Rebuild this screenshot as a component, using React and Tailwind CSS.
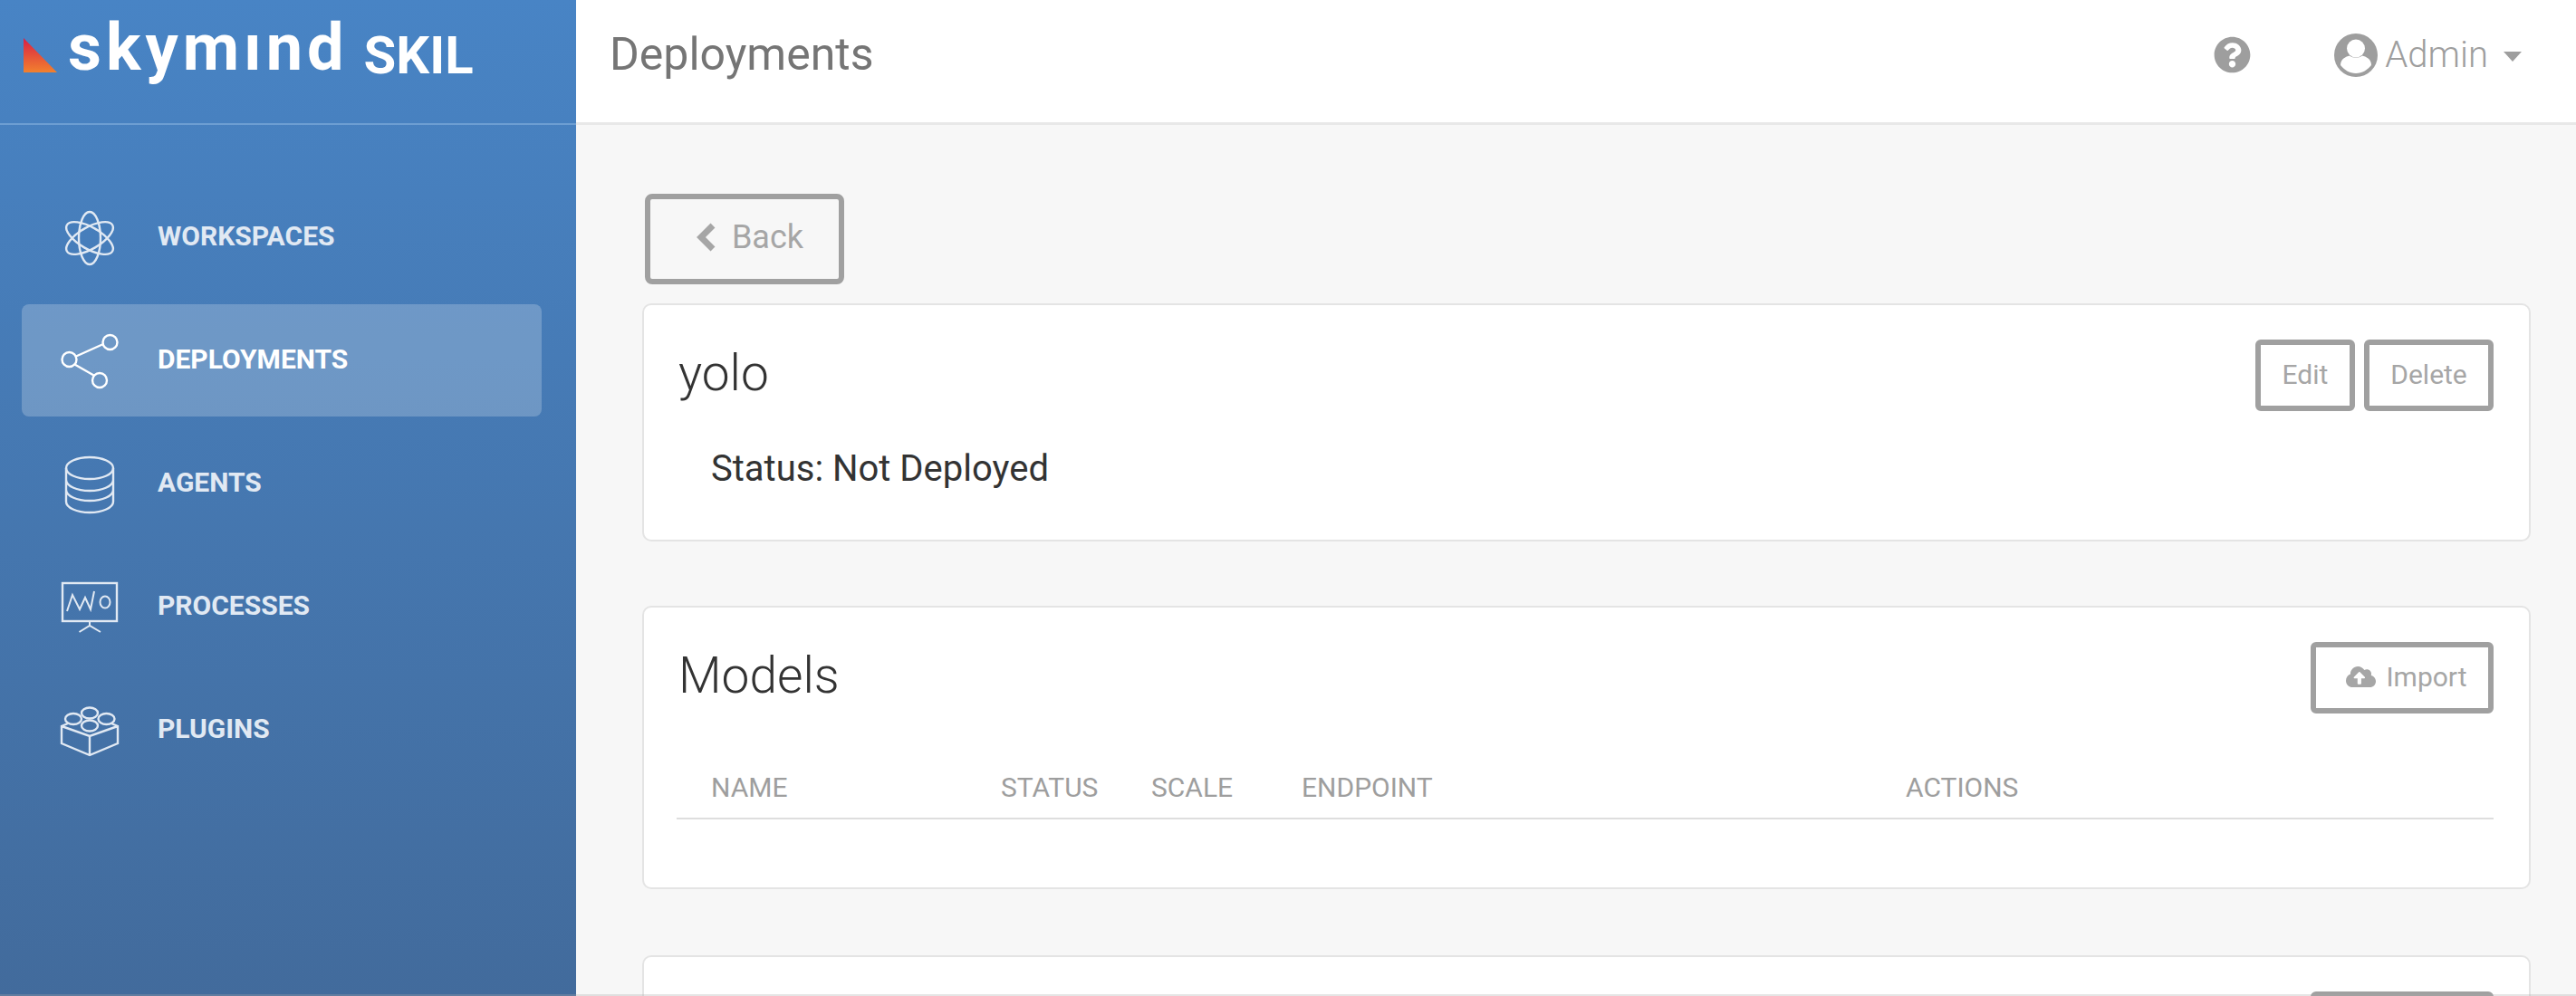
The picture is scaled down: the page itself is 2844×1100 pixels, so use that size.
import { FaQuestionCircle, FaCloudUploadAlt } from 'react-icons/fa';

const iconProps = {
    width: 64,
    height: 64,
    viewBox: '0 0 64 64',
    fill: 'none',
    stroke: 'currentColor',
    strokeWidth: 2.4,
    className: 'shrink-0 overflow-visible',
};

function AtomIcon() {
    return (
        <svg {...iconProps}>
            <ellipse cx="32" cy="33" rx="12" ry="29" />
            <ellipse cx="32" cy="33" rx="12" ry="29" transform="rotate(60 32 33)" />
            <ellipse cx="32" cy="33" rx="12" ry="29" transform="rotate(-60 32 33)" />
        </svg>
    );
}

function ShareIcon() {
    return (
        <svg {...iconProps}>
            <circle cx="54.500" cy="12" r="8" />
            <circle cx="9.500" cy="31" r="8" />
            <circle cx="43" cy="54" r="8" />
            <path d="M17 27.500 47 14M15.500 36.500l21 12" />
        </svg>
    );
}

function DatabaseIcon() {
    return (
        <svg {...iconProps}>
            <ellipse cx="32" cy="15" rx="26" ry="12" />
            <path d="M6 15v37a26 12 0 0 0 52 0V15M6 28a26 12 0 0 0 52 0M6 39a26 12 0 0 0 52 0" />
        </svg>
    );
}

function BoardIcon() {
    return (
        <svg {...iconProps}>
            <rect x="2" y="6" width="60" height="42" />
            <path d="M32 48v5M20.500 60 32 53l12 7M7 37l6-18 8 16 6-13 6 13 4-20" strokeWidth="2" />
            <ellipse cx="49" cy="27" rx="5.500" ry="6.500" strokeWidth="2" />
        </svg>
    );
}

function BlockIcon() {
    return (
        <svg {...iconProps}>
            <path d="M8 25 1 28v19l31 13 31-13V28l-7-3M1 28l31 11 31-11M32 39v21" />
            <ellipse cx="32" cy="13.500" rx="9" ry="6" />
            <ellipse cx="14" cy="20" rx="9" ry="6" />
            <ellipse cx="50.500" cy="20" rx="9" ry="6" />
            <ellipse cx="32" cy="27.500" rx="9" ry="6" />
        </svg>
    );
}

function UserIcon() {
    return (
        <svg width="48" height="48" viewBox="0 0 48 48" className="shrink-0">
            <circle cx="24" cy="24" r="24" fill="#9e9e9e" />
            <circle cx="24" cy="16.500" r="10" fill="#fff" />
            <path d="M7 35c0-7 6-9.500 10-10.500 4 3 10 3 14 0 4 1 10 3.500 10 10.500-4 5-10 9-17 9S11 40 7 35Z" fill="#fff" />
        </svg>
    );
}

function BackChevron() {
    return (
        <svg width="21" height="32" viewBox="0 0 21 32" fill="none" stroke="currentColor" strokeWidth="7" className="shrink-0">
            <path d="M18 3 5 16l13 13" />
        </svg>
    );
}

function OutlineButton({ className, children }) {
    return (
        <button className={`flex items-center justify-center border-[6px] border-[#a0a0a0] rounded-[6px] text-[#a6a6a6] ${className}`}>
            {children}
        </button>
    );
}

function NavItem({ icon, label, active }) {
    return (
        <div className={`flex items-center h-[124px] pl-[43px] rounded-[8px] ${active ? 'bg-white/22 text-white' : 'text-[#e1e9f3]'}`}>
            {icon}
            <span className="ml-[43px] pb-[3px] text-[30px] font-bold">{label}</span>
        </div>
    );
}

function Sidebar() {
    return (
        <aside className="w-[636px] shrink-0 h-full bg-gradient-to-b from-[#4884c5] to-[#426b9c]">
            <div className="h-[138px] border-b-[2px] border-[#6d9ed2] flex items-start pl-[26px] text-white">
                <svg width="37" height="38" viewBox="0 0 37 38" className="mt-[42px] shrink-0">
                    <defs>
                        <linearGradient id="logoFill" x1="0" y1="0" x2="0" y2="1">
                            <stop offset="0" stopColor="#d81f45" />
                            <stop offset="1" stopColor="#f2812e" />
                        </linearGradient>
                    </defs>
                    <polygon points="0,0 37,38 0,38" fill="url(#logoFill)" />
                </svg>
                <span className="ml-[12px] mt-[8px] text-[72px] leading-[90px] font-bold tracking-[5px]">skymınd</span>
                <span className="ml-[17px] mt-[26px] text-[58px] leading-[70px] font-bold">SKIL</span>
            </div>
            <nav className="flex flex-col gap-[12px] pt-[62px] pl-[24px] pr-[38px]">
                <NavItem icon={<AtomIcon />} label="WORKSPACES" />
                <NavItem icon={<ShareIcon />} label="DEPLOYMENTS" active />
                <NavItem icon={<DatabaseIcon />} label="AGENTS" />
                <NavItem icon={<BoardIcon />} label="PROCESSES" />
                <NavItem icon={<BlockIcon />} label="PLUGINS" />
            </nav>
        </aside>
    );
}

function TopBar() {
    return (
        <header className="h-[138px] shrink-0 bg-white border-b-[3px] border-[#e8e8e8] flex items-center justify-between pl-[37px] pr-[60px] pb-[14px]">
            <h1 className="text-[50px] text-[#757575]">Deployments</h1>
            <div className="flex items-center text-[#9e9e9e]">
                <FaQuestionCircle className="text-[41px]" />
                <div className="ml-[92px] flex items-center">
                    <UserIcon />
                    <span className="ml-[8px] text-[40px] font-light">Admin</span>
                    <div className="ml-[17px] mt-[3px] w-0 h-0 border-x-[10px] border-x-transparent border-t-[11px] border-t-[#9e9e9e]" />
                </div>
            </div>
        </header>
    );
}

function Card({ className, children }) {
    return (
        <section className={`ml-[-3px] mr-[-1px] bg-white border-[2px] border-[#e4e4e4] rounded-[10px] pl-[36px] pr-[39px] pt-[38px] shrink-0 ${className}`}>
            {children}
        </section>
    );
}

const columns = [
    ['NAME', 'w-[320px]'],
    ['STATUS', 'w-[166px]'],
    ['SCALE', 'w-[166px]'],
    ['ENDPOINT', 'w-[667px]'],
    ['ACTIONS', 'flex-1'],
];

export default function App() {
    return (
        <div className="relative flex h-screen overflow-hidden bg-[#f7f7f7] font-['Roboto',sans-serif]">
            <Sidebar />
            <div className="flex-1 min-w-0 flex flex-col">
                <TopBar />
                <main className="flex-1 min-h-0 overflow-hidden pt-[76px] pl-[76px] pr-[51px] flex flex-col">
                    <OutlineButton className="w-[220px] h-[100px] shrink-0 text-[36px] gap-[18px] bg-[#f7f7f7] rounded-[8px] pb-[4px] pl-[12px]">
                        <BackChevron />
                        <span>Back</span>
                    </OutlineButton>

                    <Card className="mt-[21px] h-[263px]">
                        <div className="flex justify-between">
                            <h2 className="text-[55px] font-light text-[#333] leading-[75px] ml-[2px]">yolo</h2>
                            <div className="flex gap-[10px]">
                                <OutlineButton className="w-[110px] h-[79px] text-[30px] pb-[2px]">Edit</OutlineButton>
                                <OutlineButton className="w-[143px] h-[79px] text-[30px] pb-[2px]">Delete</OutlineButton>
                            </div>
                        </div>
                        <p className="mt-[34px] ml-[38px] text-[40px] text-[#333] leading-[60px]">Status: Not Deployed</p>
                    </Card>

                    <Card className="mt-[71px] h-[313px]">
                        <div className="flex justify-between">
                            <h2 className="text-[55px] font-light text-[#333] leading-[75px] ml-[2px]">Models</h2>
                            <OutlineButton className="w-[202px] h-[79px] text-[30px] gap-[11px] pb-[2px] pl-[10px]">
                                <FaCloudUploadAlt className="text-[33px]" />
                                <span>Import</span>
                            </OutlineButton>
                        </div>
                        <div className="mt-[52px] flex items-center h-[65px] pb-[5px] border-b-[2px] border-[#dedede] pl-[38px] text-[30px] text-[#9e9e9e]">
                            {columns.map(([name, width]) => (
                                <div key={name} className={width}>{name}</div>
                            ))}
                        </div>
                    </Card>

                    <Card className="mt-[73px] h-[300px]">
                        <div className="flex justify-end">
                            <OutlineButton className="w-[202px] h-[79px]" />
                        </div>
                    </Card>
                </main>
            </div>
            {/* faint strip along the bottom edge of the window */}
            <div className="absolute bottom-0 inset-x-0 h-[2px] bg-[#aaaaaa]/30" />
        </div>
    );
}
